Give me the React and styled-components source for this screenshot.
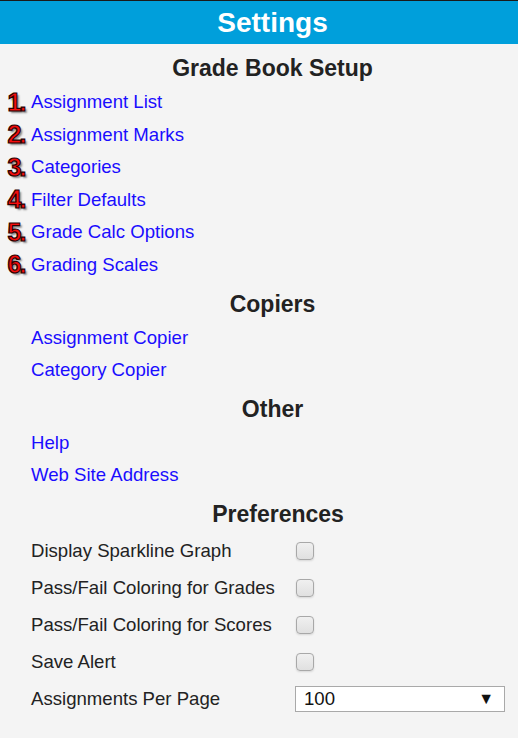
import React from "react";
import styled, { createGlobalStyle } from "styled-components";

const GlobalStyle = createGlobalStyle`
  html, body {
    margin: 0;
    padding: 0;
    background: #f4f4f4;
    font-family: "Liberation Sans", Arial, Helvetica, sans-serif;
  }
`;

const Page = styled.div`
  width: 518px;
  min-height: 738px;
  background: #f4f4f4;
`;

const Header = styled.header`
  height: 43px;
  border-top: 1px solid #1a1a1a;
  background: #009fdb;
  color: #fff;
  display: flex;
  align-items: center;
  justify-content: center;
  padding-left: 27px;
  font-size: 28px;
  font-weight: bold;
`;

const Content = styled.main`
  padding-top: 1px;
`;

const Section = styled.section`
  margin-top: 5px;
`;

const Heading = styled.h2`
  margin: 0;
  height: 36px;
  display: flex;
  align-items: center;
  justify-content: center;
  padding-left: ${props => props.shift || 27}px;
  font-size: 23px;
  font-weight: bold;
  color: #222;
`;

const LinkRow = styled.div`
  height: ${props => props.h || 32}px;
  display: flex;
  align-items: center;
`;

const Gutter = styled.div`
  width: 31px;
  display: flex;
  justify-content: center;
  padding-left: 1px;
  box-sizing: border-box;
`;

const Badge = styled.span`
  font-size: 25px;
  font-weight: 900;
  color: #f50d0d;
  -webkit-text-stroke: 1.2px #2a0000;
  text-shadow: 2px 2px 2px rgba(0, 0, 0, 0.45);
  letter-spacing: -2px;
  line-height: 1;
`;

const Link = styled.a`
  color: #1a0dff;
  font-size: 18.6px;
  text-decoration: none;
`;

const PrefRow = styled.div`
  height: 37px;
  display: grid;
  grid-template-columns: 264px 1fr;
  align-items: center;
  padding-left: 31px;
  padding-right: 13px;
`;

const Label = styled.span`
  font-size: 18.6px;
  color: #222;
`;

const Check = styled.span`
  display: block;
  width: 16px;
  height: 16px;
  margin-left: 1px;
  border: 1px solid #a8a8a8;
  border-radius: 4px;
  background: linear-gradient(#f0f0f0, #e0e0e0);
  box-shadow: 0 1px 2px rgba(0, 0, 0, 0.12);
`;

const Select = styled.div`
  height: 24px;
  border: 1px solid #a9a9a9;
  background: #fff;
  display: flex;
  align-items: center;
  justify-content: space-between;
  padding: 0 10px 0 8px;
  font-size: 18.6px;
  color: #111;
`;

const Arrow = styled.span`
  font-size: 16px;
  color: #111;
`;

const setup = [
  "Assignment List",
  "Assignment Marks",
  "Categories",
  "Filter Defaults",
  "Grade Calc Options",
  "Grading Scales",
];

const prefs = [
  "Display Sparkline Graph",
  "Pass/Fail Coloring for Grades",
  "Pass/Fail Coloring for Scores",
  "Save Alert",
];

export default function App() {
  return (
    <Page>
      <GlobalStyle />
      <Header>Settings</Header>
      <Content>
        <Section>
          <Heading>Grade Book Setup</Heading>
          {setup.map((item, i) => (
            <LinkRow key={item} h={32.5}>
              <Gutter>
                <Badge>{i + 1}.</Badge>
              </Gutter>
              <Link href="#">{item}</Link>
            </LinkRow>
          ))}
        </Section>

        <Section>
          <Heading>Copiers</Heading>
          {["Assignment Copier", "Category Copier"].map(item => (
            <LinkRow key={item}>
              <Gutter />
              <Link href="#">{item}</Link>
            </LinkRow>
          ))}
        </Section>

        <Section>
          <Heading>Other</Heading>
          {["Help", "Web Site Address"].map(item => (
            <LinkRow key={item}>
              <Gutter />
              <Link href="#">{item}</Link>
            </LinkRow>
          ))}
        </Section>

        <Section>
          <Heading shift={38}>Preferences</Heading>
          {prefs.map(item => (
            <PrefRow key={item}>
              <Label>{item}</Label>
              <Check />
            </PrefRow>
          ))}
          <PrefRow>
            <Label>Assignments Per Page</Label>
            <Select>
              <span>100</span>
              <Arrow>▼</Arrow>
            </Select>
          </PrefRow>
        </Section>
      </Content>
    </Page>
  );
}
